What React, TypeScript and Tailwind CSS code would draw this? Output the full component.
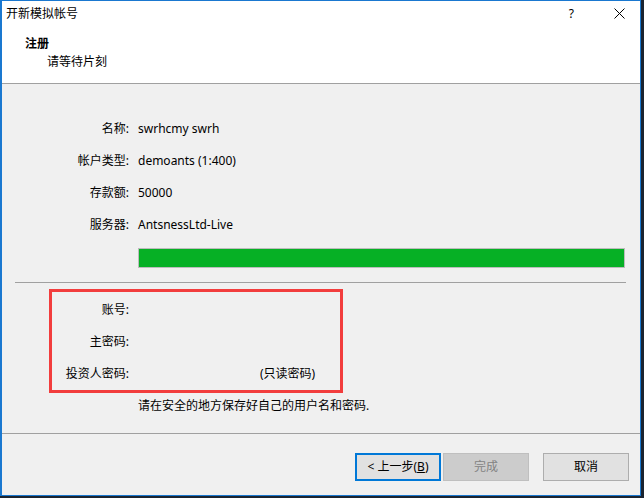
import React from 'react'

const FONT = { fontFamily: '"Noto Sans", "Noto Sans CJK SC", sans-serif' }

const INFO_ROWS: ReadonlyArray<{ label: string; value: string }> = [
  { label: '名称:', value: 'swrhcmy swrh' },
  { label: '帐户类型:', value: 'demoants (1:400)' },
  { label: '存款额:', value: '50000' },
  { label: '服务器:', value: 'AntsnessLtd-Live' },
]

const LOGIN_ROWS: ReadonlyArray<{ label: string; note?: string }> = [
  { label: '账号:' },
  { label: '主密码:' },
  { label: '投资人密码:', note: '(只读密码)' },
]

function CloseIcon() {
  return (
    <svg width="11" height="11" viewBox="0 0 11 11" aria-hidden>
      <path d="M0.5 0.5L10.5 10.5M10.5 0.5L0.5 10.5" stroke="#000" strokeWidth="1" />
    </svg>
  )
}

/** 开新模拟帐号 向导对话框 */
export default function App() {
  return (
    <div className="h-[498px] w-[644px] overflow-hidden bg-[#1b2430] text-[12px] text-black" style={FONT}>
      <div className="flex h-[496px] w-[641px] flex-col border border-l-2 border-[#1a78d0] bg-white">
        {/* 标题栏 */}
        <div className="flex h-[25px] shrink-0 items-center pl-[4px]">
          <span className="leading-none">开新模拟帐号</span>
          <span className="ml-auto mr-[40px] leading-none">?</span>
          <span className="mr-[15px] flex items-center">
            <CloseIcon />
          </span>
        </div>

        {/* 头部 */}
        <div className="h-[58px] shrink-0 border-b border-[#a0a0a0] pl-[23px] pt-[9px]">
          <div className="h-[18px] font-bold leading-[18px]">注册</div>
          <div className="h-[18px] pl-[22px] leading-[18px]">请等待片刻</div>
        </div>

        {/* 内容 */}
        <div className="flex flex-1 flex-col bg-[#f0f0f0]">
          <div className="flex flex-col gap-[12px] pt-[35px]">
            {INFO_ROWS.map((row) => (
              <div key={row.label} className="flex h-[20px] items-center">
                <span className="w-[127px] text-right">{row.label}</span>
                <span className="ml-[9px]">{row.value}</span>
              </div>
            ))}
          </div>

          {/* 进度条 */}
          <div className="ml-[136px] mt-[13px] h-[20px] w-[487px] border border-[#bcbcbc] bg-[#e6e6e6]">
            <div className="h-full w-full bg-[#06b025]" />
          </div>

          <div className="ml-[13px] mr-[14px] mt-[14px] h-px bg-[#a0a0a0]" />

          {/* 登录信息 */}
          <div className="ml-[47px] mt-[6px] flex w-[294px] flex-col gap-[12px] border-[3px] border-[#f23d3d] pb-[6px] pt-[8px]">
            {LOGIN_ROWS.map((row) => (
              <div key={row.label} className="flex h-[20px] items-center">
                <span className="w-[77px] text-right">{row.label}</span>
                {row.note && <span className="ml-[131px]">{row.note}</span>}
              </div>
            ))}
          </div>

          <div className="ml-[136px] flex h-[20px] items-center pt-[6px]">
            请在安全的地方保存好自己的用户名和密码.
          </div>

          <div className="flex-1" />

          {/* 按钮 */}
          <div className="flex h-[62px] shrink-0 items-start justify-end border-t border-[#a0a0a0] pr-[11px] pt-[19px]">
            <button className="h-[28px] w-[86px] border-2 border-[#0078d7] bg-[#e1e1e1] text-[12px]">
              &lt; 上一步(<span className="underline">B</span>)
            </button>
            <button className="ml-[2px] h-[28px] w-[86px] border border-[#bfbfbf] bg-[#cccccc] text-[12px] text-[#838383]">
              完成
            </button>
            <button className="ml-[14px] h-[28px] w-[86px] border border-[#adadad] bg-[#e1e1e1] text-[12px]">
              取消
            </button>
          </div>
        </div>
      </div>
    </div>
  )
}
